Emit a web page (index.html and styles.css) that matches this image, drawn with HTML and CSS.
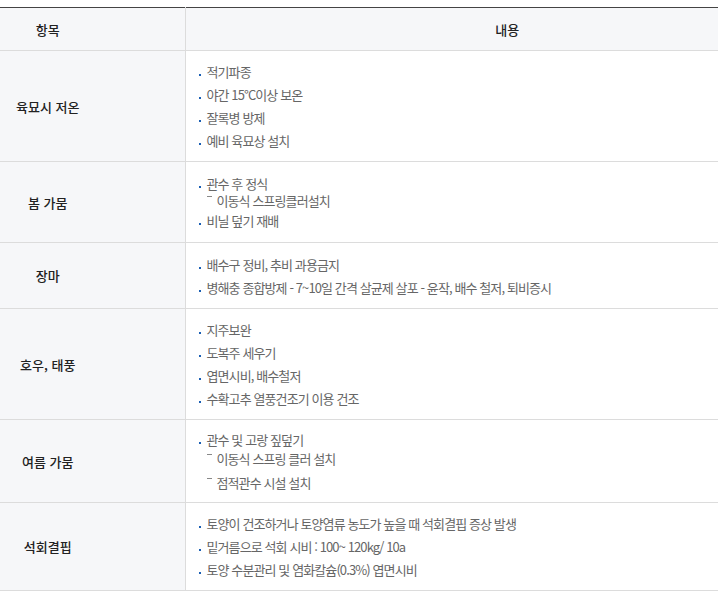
FILE: index.html
```html
<!DOCTYPE html>
<html lang="ko">
<head>
<meta charset="utf-8">
<link rel="stylesheet" href="styles.css">
</head>
<body>
<table class="tbl">
  <colgroup><col class="c-head"><col class="c-body"></colgroup>
  <thead>
    <tr><th class="th-item">항목</th><th class="th-content">내용</th></tr>
  </thead>
  <tbody>
    <tr class="r1">
      <th class="label">육묘시 저온</th>
      <td class="cell">
        <ul class="list">
          <li>적기파종</li>
          <li>야간 15°C이상 보온</li>
          <li>잘록병 방제</li>
          <li>예비 육묘상 설치</li>
        </ul>
      </td>
    </tr>
    <tr class="r2">
      <th class="label">봄 가뭄</th>
      <td class="cell">
        <ul class="list">
          <li>관수 후 정식
            <ul class="sub"><li>이동식 스프링클러설치</li></ul>
          </li>
          <li class="after-sub">비닐 덮기 재배</li>
        </ul>
      </td>
    </tr>
    <tr class="r3">
      <th class="label">장마</th>
      <td class="cell">
        <ul class="list">
          <li>배수구 정비, 추비 과용금지</li>
          <li>병해충 종합방제 - 7~10일 간격 살균제 살포 - 윤작, 배수 철저, 퇴비증시</li>
        </ul>
      </td>
    </tr>
    <tr class="r4">
      <th class="label">호우, 태풍</th>
      <td class="cell">
        <ul class="list">
          <li>지주보완</li>
          <li>도복주 세우기</li>
          <li>엽면시비, 배수철저</li>
          <li>수확고추 열풍건조기 이용 건조</li>
        </ul>
      </td>
    </tr>
    <tr class="r5">
      <th class="label">여름 가뭄</th>
      <td class="cell">
        <ul class="list">
          <li>관수 및 고랑 짚덮기
            <ul class="sub sub-spaced">
              <li>이동식 스프링 클러 설치</li>
              <li>점적관수 시설 설치</li>
            </ul>
          </li>
        </ul>
      </td>
    </tr>
    <tr class="r6">
      <th class="label">석회결핍</th>
      <td class="cell">
        <ul class="list">
          <li>토양이 건조하거나 토양염류 농도가 높을 때 석회결핍 증상 발생</li>
          <li>밑거름으로 석회 시비 : 100~ 120kg/ 10a</li>
          <li>토양 수분관리 및 염화칼슘(0.3%) 엽면시비</li>
        </ul>
      </td>
    </tr>
  </tbody>
</table>
</body>
</html>
```
FILE: styles.css
```css
html, body {
  margin: 0;
  padding: 0;
  background: #fff;
}
body {
  padding-top: 7px;
  font-family: "Noto Sans CJK KR", "Noto Sans", sans-serif;
  font-size: 13px;
  color: #666;
}
.tbl {
  width: 718px;
  border-collapse: collapse;
  table-layout: fixed;
  border-top: 1px solid #444;
}
.c-head { width: 185px; }
.tbl th, .tbl td {
  border-bottom: 1px solid #dcdcdc;
  padding: 0;
  vertical-align: middle;
}
.tbl thead th {
  height: 42px;
  background: #f6f7f9;
  font-weight: 500;
  color: #222;
  text-align: center;
}
.th-item {
  border-right: 1px solid #dcdcdc;
  padding-right: 89px !important;
}
.th-content {
  padding-left: 111px !important;
}
.label {
  background: #f6f7f9;
  border-right: 1px solid #dcdcdc;
  font-weight: 500;
  color: #222;
  text-align: center;
  padding-right: 89px !important;
}
.r1 .cell, .r4 .cell { height: 110px; }
.r2 .cell { height: 80px; }
.r3 .cell { height: 65px; }
.r5 .cell { height: 82px; }
.r6 .cell { height: 87px; }
.cell {
  padding-left: 12px !important;
  letter-spacing: -0.9px;
}
.list {
  list-style: none;
  margin: 0;
  padding: 0;
}
.list > li {
  position: relative;
  line-height: 17px;
  padding-left: 9px;
}
.list > li + li { margin-top: 6px; }
.list > li.after-sub { margin-top: 3px; }
.list > li::before {
  content: "";
  position: absolute;
  left: 1px;
  top: 11px;
  width: 2px;
  height: 2px;
  background: #1a5fb4;
}
.sub {
  list-style: none;
  margin: 0;
  padding: 0;
}
.sub > li {
  position: relative;
  line-height: 17px;
  padding-left: 10px;
}
.sub > li::before {
  content: "";
  position: absolute;
  left: 0;
  top: 4px;
  width: 5px;
  height: 1px;
  background: #888;
}
.sub-spaced { margin-top: 2px; }
.sub-spaced > li + li { margin-top: 7px; }
```
